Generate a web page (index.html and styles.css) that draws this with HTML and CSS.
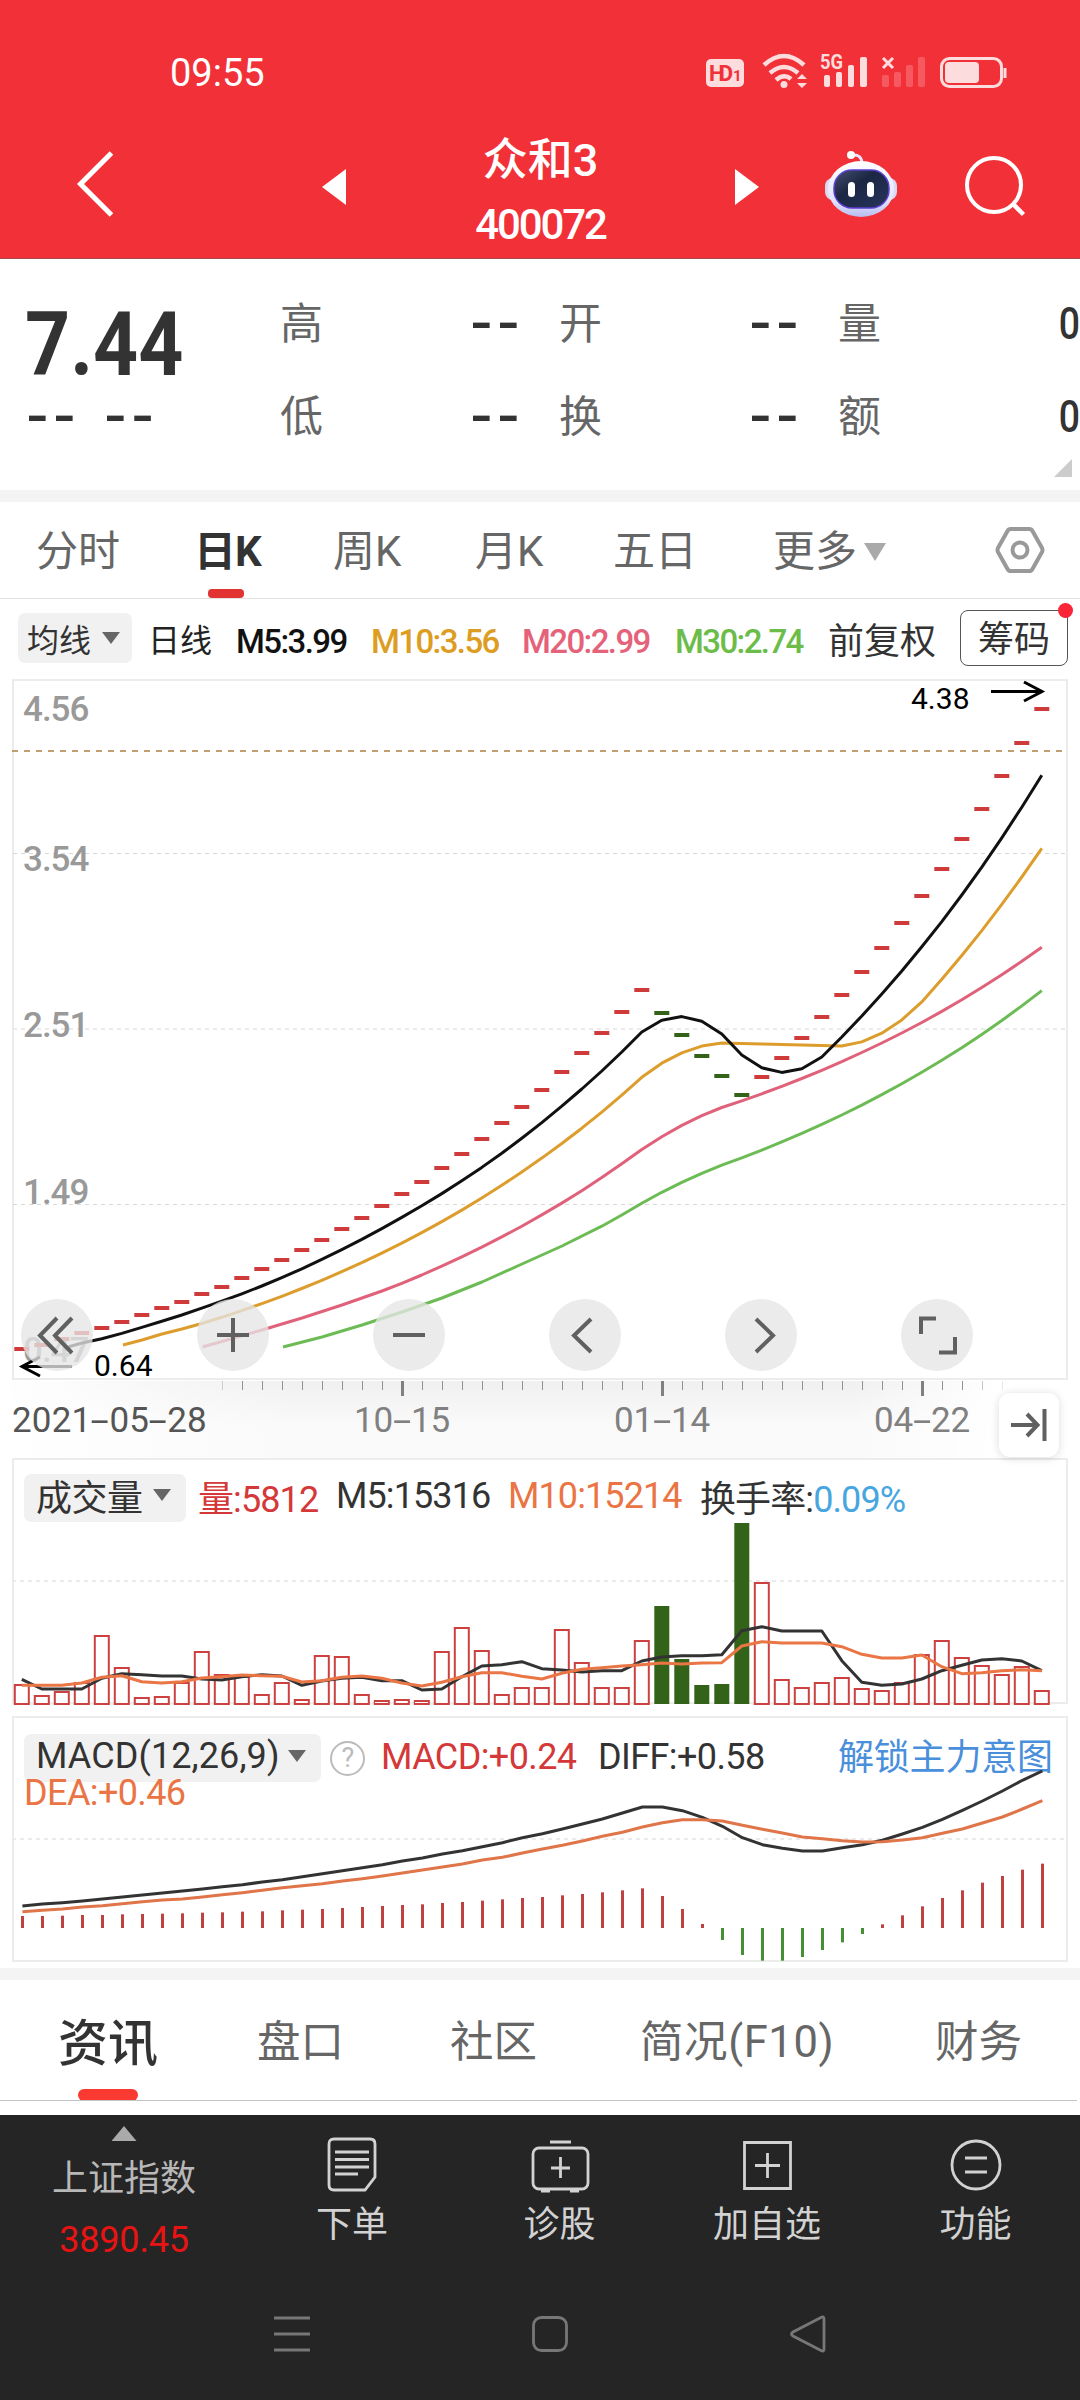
FILE: index.html
```html
<!DOCTYPE html>
<html lang="zh-CN">
<head>
<meta charset="utf-8">
<title>众和3 400072</title>
<link rel="stylesheet" href="styles.css">
</head>
<body>
<header class="top">
  <div class="status">
    <span class="clock">09:55</span>
    <svg class="status-icons" width="304" height="40" viewBox="704 50 304 40">
      <rect x="706" y="59" width="38" height="28" rx="5" fill="#fddcdd"/>
      <text x="709" y="81" class="hd" textLength="24">HD</text><text x="733" y="81" class="hd-sub">1</text>
      <g fill="none" stroke="#fddcdd" stroke-width="4.500">
        <path d="M764 65Q784 47 804 65M770 73Q784 61 798 73M776 80Q784 73 791 79"/>
      </g>
      <circle cx="784" cy="84.500" r="3.500" fill="#fddcdd"/>
      <path d="M797 79l5-5 5 5zM797 83l5 5 5-5z" fill="#fddcdd"/>
      <text x="820" y="69" class="net" textLength="23" lengthAdjust="spacingAndGlyphs">5G</text>
      <g fill="#fddcdd"><rect x="824" y="75" width="6" height="12" rx="2"/><rect x="836" y="72" width="6" height="15" rx="2"/><rect x="848" y="65" width="6" height="22" rx="2"/><rect x="860" y="57" width="7" height="30" rx="2"/></g>
      <path d="M883 58l10 10m0-10l-10 10" stroke="#fddcdd" stroke-width="3"/>
      <g fill="#f65a60"><rect x="882" y="75" width="7" height="12" rx="2"/><rect x="894" y="72" width="7" height="15" rx="2"/><rect x="906" y="65" width="7" height="22" rx="2"/><rect x="918" y="57" width="7" height="30" rx="2"/></g>
      <rect x="941.500" y="58.500" width="60" height="28" rx="8" fill="none" stroke="#fddcdd" stroke-width="3"/>
      <rect x="945" y="62" width="34" height="21" rx="4" fill="#fddcdd"/>
      <path d="M1005 68v10" stroke="#fddcdd" stroke-width="3"/>
    </svg>
  </div>
  <div class="titlebar">
    <svg class="back" width="44" height="70" viewBox="0 0 44 70" fill="none" stroke="#fff" stroke-width="5"><path d="M37.500 4L6.500 35 37.500 66"/></svg>
    <svg class="prev" width="24" height="36" viewBox="0 0 24 36" fill="#fff"><path d="M24 0v36L0 18z"/></svg>
    <div class="name"><h1>众和3</h1><p>400072</p></div>
    <svg class="next" width="24" height="36" viewBox="0 0 24 36" fill="#fff"><path d="M0 0v36l24-18z"/></svg>
    <svg class="robot" width="74" height="70" viewBox="824 149 74 70">
      <defs>
        <linearGradient id="shell" x1="0" y1="0" x2="0" y2="1"><stop offset="0" stop-color="#fff"/><stop offset=".7" stop-color="#e4e4fb"/><stop offset="1" stop-color="#b9bdf0"/></linearGradient>
        <linearGradient id="visor" x1="0" y1="0" x2="1" y2="1"><stop offset="0" stop-color="#45506f"/><stop offset=".4" stop-color="#1c2744"/><stop offset="1" stop-color="#27345c"/></linearGradient>
      </defs>
      <path d="M862 164Q862 154 852 155" fill="none" stroke="#e9e6fb" stroke-width="3"/>
      <circle cx="851" cy="155" r="4" fill="#fff"/>
      <rect x="825" y="178" width="72" height="22" rx="8" fill="#dcd9f7"/>
      <ellipse cx="861" cy="189" rx="33" ry="28" fill="url(#shell)"/>
      <rect x="834" y="170" width="55" height="38" rx="18" fill="url(#visor)" stroke="#5a3fd0" stroke-width="1.500"/>
      <rect x="848" y="182" width="7" height="15" rx="3.500" fill="#fff"/><rect x="867" y="182" width="7" height="15" rx="3.500" fill="#fff"/>
    </svg>
    <svg class="search" width="62" height="62" viewBox="964 155 62 62" fill="none" stroke="#fff" stroke-width="4"><circle cx="994" cy="185" r="27"/><path d="M1013 204l10.500 10.500" stroke-width="4.500"/></svg>
  </div>
</header>

<section class="quote">
  <div class="price"><strong>7.44</strong><p class="dash"><span>--</span><span>--</span></p></div>
  <dl>
    <dt>高</dt><dd class="dash">--</dd><dt>开</dt><dd class="dash">--</dd><dt>量</dt><dd>0</dd>
    <dt>低</dt><dd class="dash">--</dd><dt>换</dt><dd class="dash">--</dd><dt>额</dt><dd>0</dd>
  </dl>
  <i class="corner"></i>
</section>

<nav class="periods">
  <span>分时</span><span class="on">日K</span><span>周K</span><span>月K</span><span>五日</span><span>更多<i class="caret"></i></span>
  <svg width="50" height="48" viewBox="0 0 50 48" fill="none" stroke="#999" stroke-width="4"><path d="M15.500 3h19q2 0 3 2L47 22q1 2 0 4L37.500 43q-1 2-3 2h-19q-2 0-3-2L3 26q-1-2 0-4L12.500 5q1-2 3-2z"/><circle cx="25" cy="24" r="7.500"/></svg>
</nav>

<section class="averages">
  <span class="pick">均线<i class="caret"></i></span>
  <span class="day">日线</span>
  <span class="num black">M5:3.99</span><span class="num gold">M10:3.56</span><span class="num pink">M20:2.99</span><span class="num green">M30:2.74</span>
  <span class="adj">前复权</span>
  <span class="chips">筹码<i></i></span>
</section>

<section class="kline">
  <svg id="kline" width="1080" height="702" viewBox="0 679 1080 702">
    <rect x="13" y="680" width="1054" height="699" class="frame"/>
    <path d="M13 853.500H1066M13 1204.500H1066" class="grid"/><path d="M13 1029H1066" class="grid soft"/>
    <path d="M12 751H1063" class="limit"/>
    <g class="scale"><text x="23" y="721">4.56</text><text x="23" y="871">3.54</text><text x="23" y="1037">2.51</text><text x="23" y="1204">1.49</text><text x="23" y="1362">0.47</text></g>
    <g class="plot"></g>
    <g class="peak"><text x="911" y="709">4.38</text><text x="94" y="1376">0.64</text><path d="M991 691.500h50M1024 682l18 9.500-18 9.500M72 1366.500H22M40 1357l-18 9.500 18 9.500"/></g>
  </svg>
  <div class="tools">
    <b><svg viewBox="0 0 72 72"><path d="M36 19L19 36.500 36 54M51 19L34 36.500 51 54"/></svg></b>
    <b><svg viewBox="0 0 72 72"><path d="M20 36h32M36 19v34"/></svg></b>
    <b><svg viewBox="0 0 72 72"><path d="M20 36h32"/></svg></b>
    <b><svg viewBox="0 0 72 72"><path d="M42 20L25 36.500 42 53"/></svg></b>
    <b><svg viewBox="0 0 72 72"><path d="M31 20l17 16.500L31 53"/></svg></b>
    <b><svg viewBox="0 0 72 72"><path d="M35 19.500H20V35M54 38v15.500H38"/></svg></b>
  </div>
</section>

<section class="axis">
  <svg id="ticks" width="1080" height="16" viewBox="0 1380 1080 16"></svg>
  <div class="dates"><time class="from">2021<i>-</i>05<i>-</i>28</time><time>10<i>-</i>15</time><time>01<i>-</i>14</time><time>04<i>-</i>22</time></div>
  <b class="latest"><svg width="60" height="64" viewBox="0 0 60 64" fill="none" stroke="#606060" stroke-width="4"><path d="M12 32h25M28 21l10.500 11L28 43M45.500 16v32"/></svg></b>
</section>

<section class="panel volume">
  <div class="legend">
    <span class="pick">成交量<i class="caret"></i></span>
    <span class="red">量:5812</span><span>M5:15316</span><span class="orange">M10:15214</span><span class="turnover">换手率:<em>0.09%</em></span>
  </div>
  <svg id="volume" width="1080" height="187" viewBox="0 1519 1080 187"><path d="M12 1581H1066" class="grid soft"/><g class="plot"></g></svg>
</section>

<section class="panel macd">
  <div class="legend">
    <span class="pick">MACD(12,26,9)<i class="caret"></i></span>
    <span class="help">?</span>
    <span class="red">MACD:+0.24</span><span>DIFF:+0.58</span><a>解锁主力意图</a>
  </div>
  <p class="orange">DEA:+0.46</p>
  <svg id="macd" width="1080" height="192" viewBox="0 1770 1080 192"><path d="M12 1839H1066" class="grid soft"/><g class="plot"></g></svg>
</section>

<nav class="sections"><span class="on">资讯</span><span>盘口</span><span>社区</span><span class="brief">简况(F10)</span><span>财务</span></nav>

<footer>
  <div class="actions">
    <div class="index"><i></i><span>上证指数</span><strong>3890.45</strong></div>
    <div><svg viewBox="0 0 60 56"><path d="M12 2h36q5 0 5 5v33L43 53H12q-5 0-5-5V7q0-5 5-5z"/><path d="M13 15h34M13 22.500h34M13 30h34M13 37h23"/></svg><span>下单</span></div>
    <div><svg viewBox="0 0 60 56"><rect x="3" y="11" width="55" height="41" rx="6"/><path d="M20 5h21M30.500 20v21M21 31h19M11 54h9M40 54h9"/></svg><span>诊股</span></div>
    <div><svg viewBox="0 0 60 56"><path d="M7.500 5.500h46v46h-46zM30.500 16v25M18 28.500h25"/></svg><span>加自选</span></div>
    <div><svg viewBox="0 0 60 56"><circle cx="30" cy="28" r="24"/><path d="M19 21h22M19 35h22"/></svg><span>功能</span></div>
  </div>
  <div class="system">
    <svg viewBox="0 0 40 40"><path d="M2 4h36M2 20h36M2 36h36"/></svg>
    <svg viewBox="0 0 40 40"><rect x="3.500" y="3.500" width="33" height="33" rx="8"/></svg>
    <svg viewBox="0 0 40 40"><path d="M36 5v30q0 3-3 1.500L5 22q-3-2 0-4L33 3.500q3-1.500 3 1.500z"/></svg>
  </div>
</footer>
<script src="charts.js"></script>
</body>
</html>
```
FILE: styles.css
```css
* { box-sizing: border-box; margin: 0; padding: 0; }
body { width: 1080px; background: #fff; color: #333; font-family: Roboto, "Noto Sans CJK SC", sans-serif; font-size: 42px; overflow-x: hidden; }
svg { display: block; flex: none; }
i, em { font-style: normal; }

.top { height: 259px; background: #f23037; border-bottom: 1px solid #a8484c; color: #fff; }
.status { height: 130px; display: flex; justify-content: space-between; align-items: flex-start; padding: 50px 72px 0 170px; }
.clock { font-size: 38px; line-height: 47px; }
.hd { font: 700 22px Roboto, sans-serif; fill: #f23037; }
.hd-sub { font: 700 15px Roboto, sans-serif; fill: #f23037; }
.net { font: 700 20px Roboto, sans-serif; fill: #fddcdd; }
.titlebar { height: 128px; display: grid; grid-template-columns: 74px 44px 204px 24px 389px 24px 65px 74px 66px 62px; align-items: center; }
.back { grid-column: 2; margin-top: -20px; }
.prev { grid-column: 4; margin-top: -15px; }
.name { grid-column: 5; text-align: center; }
.next { grid-column: 6; margin-top: -15px; }
.robot { grid-column: 8; margin-top: -20px; }
.search { grid-column: 10; margin-top: -16px; }
.name h1 { font-size: 45px; line-height: 56px; margin-bottom: 5px; font-weight: 500; }
.name p { font-size: 42px; line-height: 62px; font-weight: 500; letter-spacing: -2.100px; }

.quote { height: 243px; border-bottom: 12px solid #f4f4f4; display: grid; grid-template-columns: 279px 801px; position: relative; }
.price { padding: 48px 0 0 25px; }
.price strong { display: block; font-size: 89px; line-height: 76px; transform: scaleX(.885); transform-origin: 0 50%; white-space: nowrap; }
.price .dash { display: flex; gap: 24px; line-height: 60px; height: 60px; padding-left: 1px; }
.dash { font-family: "Liberation Sans", sans-serif; font-size: 68px; letter-spacing: 4.400px; font-weight: 400; }
dl { display: grid; grid-template-columns: 60px 219px 60px 219px 60px 183px; grid-template-rows: 93px 93px; align-items: center; padding-top: 18px; }
dt { font-size: 43px; color: #666; line-height: 60px; white-space: nowrap; padding-left: 1px; }
dd { font-size: 44px; font-weight: 500; line-height: 60px; text-align: right; }
dd:nth-of-type(3n) { transform: scaleX(.85); transform-origin: 100% 50%; }
dd.dash { font-size: 68px; font-weight: 400; padding: 0 34px 8px 0; }
.corner { position: absolute; right: 8px; top: 200px; width: 18px; height: 18px; background: #ccc; clip-path: polygon(100% 0, 100% 100%, 0 100%); }

.periods { height: 97px; border-bottom: 1px solid #e3e3e3; display: grid; grid-template-columns: 158px 139px 142px 138px 160px 222px 50px; padding-left: 36px; align-items: center; color: #666; font-size: 42px; }
.periods span { position: relative; line-height: 99px; height: 96px; white-space: nowrap; }
.periods .on { color: #333; font-weight: 700; letter-spacing: -1px; }
.periods .on::after { content: ""; position: absolute; left: 14px; bottom: 0; width: 36px; height: 9px; border-radius: 4px; background: #e23333; }
.caret { display: inline-block; width: 18px; height: 12px; background: #666; clip-path: polygon(0 0, 100% 0, 50% 100%); }
.periods .caret { width: 22px; height: 18px; background: #aaa; margin-left: 7px; vertical-align: 5px; }

.averages { height: 80px; display: grid; grid-template-columns: 130px 88px 135px 151px 153px 153px 132px 108px; padding: 0 0 2px 18px; align-items: center; }
.pick { background: #f1f1f1; border-radius: 7px; white-space: nowrap; display: flex; align-items: center; justify-content: space-between; }
.averages .pick { width: 114px; height: 50px; font-size: 32px; padding: 0 12px 0 9px; }
.day { font-size: 32px; color: #222; }
.num { font-size: 33px; font-weight: 500; letter-spacing: -1.600px; padding-top: 6px; }
.black { color: #111; } .gold { color: #dc9d22; } .pink { color: #e4627a; } .green { color: #6cbc49; }
.adj { font-size: 36px; white-space: nowrap; }
.chips { position: relative; height: 56px; border: 1.500px solid #555; border-radius: 8px; font-size: 36px; line-height: 59px; text-align: center; }
.chips i { position: absolute; right: -6px; top: -8px; width: 15px; height: 15px; border-radius: 50%; background: #fb2538; }

.kline { height: 702px; position: relative; }
.frame { fill: none; stroke: #ececec; stroke-width: 2; }
.grid { stroke: #d8d8d8; stroke-width: 1; stroke-dasharray: 4 4; }
.grid.soft { stroke: #ebebeb; stroke-width: 2; }
.limit { stroke: #c0a070; stroke-width: 2; stroke-dasharray: 6 6; }
.scale { font: 500 35px Roboto, sans-serif; fill: #999; letter-spacing: -1px; }
.peak text { font: 400 30px Roboto, sans-serif; fill: #000; }
.peak path { fill: none; stroke: #000; stroke-width: 3; }
.line { fill: none; stroke-width: 3; stroke-linejoin: round; }
.tools { position: absolute; left: 21px; top: 620px; display: flex; gap: 104px; }
.tools b { width: 72px; height: 72px; border-radius: 50%; background: rgba(230, 230, 230, .78); }
.tools svg { width: 72px; height: 72px; fill: none; stroke: #606060; stroke-width: 4; }

.axis { height: 77px; position: relative; background: linear-gradient(90deg, #fff 0, rgba(255,255,255,0) 300px, rgba(255,255,255,0) 850px, #fff 1000px), linear-gradient(#f0f0f0, #fafafa 60%); }
.dates { display: grid; grid-template-columns: 342px 260px 260px 120px; padding-left: 12px; color: #808080; font-size: 35px; line-height: 42px; margin-top: 3px; }
.dates time { white-space: nowrap; letter-spacing: -.200px; }
.dates .from { color: #555; letter-spacing: .200px; }
.dates i { display: inline-block; width: 18px; text-align: center; transform: scaleX(1.9); }
.latest { position: absolute; z-index: 1; left: 999px; top: 12px; width: 60px; height: 64px; border-radius: 11px; background: #fff; box-shadow: 0 1px 10px rgba(0,0,0,.14); }

.panel { position: relative; width: 1080px; }
.panel::before { content: ""; position: absolute; left: 12px; right: 12px; top: 0; bottom: 0; border: 2px solid #ececec; }
.panel > * { position: relative; }
.volume { height: 247px; padding-top: 12px; }
.volume::before { bottom: 1px; }
.volume > svg { margin-top: 1px; }
.macd { height: 246px; margin-top: 11px; padding-top: 12px; }
.legend { display: grid; align-items: center; height: 48px; padding-left: 24px; font-size: 36px; letter-spacing: -.900px; white-space: nowrap; }
.legend > span:not(.pick):not(.help) { padding-bottom: 3px; }
.legend > span.turnover { padding-bottom: 5px; }
.volume .legend { grid-template-columns: 174px 138px 172px 192px 260px; }
.macd .legend { grid-template-columns: 306px 51px 217px 240px 230px; }
.legend .pick { height: 48px; padding: 0 15px 4px 12px; }
.volume .pick { width: 162px; } .macd .pick { width: 297px; letter-spacing: .100px; }
.volume .pick { letter-spacing: -.500px; padding-bottom: 5px; }
.red { color: #d43838; } .orange { color: #ea7444; } .legend em { color: #47a6df; }
.legend a { color: #4a8fdc; letter-spacing: -.200px; padding-bottom: 8px; }
.help { width: 35px; height: 35px; border: 2.500px solid #bbb; border-radius: 50%; font-size: 27px; line-height: 30px; text-align: center; color: #bbb; }
.macd .red, .macd .red + span { letter-spacing: -.600px; }
.macd p { height: 0; padding-left: 24px; font-size: 36px; line-height: 34px; letter-spacing: -.600px; }
.macd > svg { margin-top: -6px; }

.sections { margin-top: 6px; border-top: 12px solid #f4f4f4; height: 147px; display: grid; grid-template-columns: 199px 193px 190px 295px 140px; padding-left: 58px; color: #666; font-size: 43.500px; position: relative; }
.sections span { line-height: 126px; height: 121px; white-space: nowrap; position: relative; }
.sections .brief { letter-spacing: .600px; }
.sections .on { color: #333; font-size: 50px; line-height: 129px; font-weight: 500; }
.sections .on::after { content: ""; position: absolute; left: 20px; bottom: 0; width: 60px; height: 12px; border-radius: 6px; background: #fa3a30; }
.sections::after { content: ""; position: absolute; left: 0; right: 3px; top: 120px; border-top: 1px solid #c4c4c4; }

footer { height: 285px; background: #252525; }
.actions { display: grid; grid-template-columns: 248px 208px 207px 208px 209px; height: 160px; color: #d2d2d2; font-size: 36px; }
.actions div { display: flex; flex-direction: column; align-items: center; padding-top: 22px; }
.actions svg { width: 60px; height: 56px; fill: none; stroke: #d2d2d2; stroke-width: 2.800; }
.actions span { line-height: 48px; margin-top: 8px; }
.actions .index { padding-top: 11px; color: #b8b8b8; }
.index i { width: 25px; height: 15px; background: #aaa; clip-path: polygon(50% 0, 100% 100%, 0 100%); }
.actions .index span { margin-top: 14px; }
.index strong { font-weight: 400; color: #e81414; font-size: 36px; line-height: 44px; margin-top: 15px; letter-spacing: -.200px; }
.system { display: flex; padding: 39px 0 0 272px; gap: 218px; }
.system svg { width: 40px; height: 40px; fill: none; stroke: #777; stroke-width: 2.800; }
```
FILE: charts.js
```js
// Plot coordinates: one trading day every 20px, 52 days.
const X = i => 21.8 + 20 * i;
const closes = [1349,1345,1339,1333,1328,1322,1315,1308,1302,1294,1287,1278,1269,1260,1250,1240,1229,1218,1206,1194,1182,1168,1154,1139,1123,1107,1090,1072,1053,1033,1012,990,1013,1035,1056,1076,1095,1077,1058,1038,1017,995,972,948,923,896,869,839,809,776,743,709];
const isDown = i => i >= 32 && i <= 36;

function add(parent, tag, attrs) {
  const el = document.createElementNS('http://www.w3.org/2000/svg', tag);
  for (const k in attrs) el.setAttribute(k, attrs[k]);
  parent.appendChild(el);
}
function line(parent, points, color) {
  add(parent, 'polyline', { points: points.map(p => p[0].toFixed(1) + ',' + p[1].toFixed(1)).join(' '), stroke: color, class: 'line' });
}
function average(n, lead) {
  const pts = lead.slice();
  for (let i = n - 1; i < closes.length; i++) {
    let sum = 0;
    for (let j = 0; j < n; j++) sum += closes[i - j];
    pts.push([X(i), sum / n]);
  }
  return pts;
}

const k = document.querySelector('#kline .plot');
closes.forEach((y, i) => add(k, 'rect', { x: X(i) - 7.5, y: y - 2, width: 15, height: 4, fill: isDown(i) ? '#336318' : '#cf3b3b' }));
line(k, average(30, [[283,1347],[322,1337],[362,1325],[402,1312],[442,1298],[482,1282],[522,1264],[562,1246]]), '#6cbb54');
line(k, average(20, [[202.5,1347],[262,1330],[302,1318],[342,1305],[382,1291]]), '#e0627a');
line(k, average(10, [[123,1345],[142,1340],[162,1334],[182,1329]]), '#dc9d2c');
line(k, average(5, [[68,1347],[82,1343]]), '#111');

const ticks = document.querySelector('#ticks');
for (let i = 10; i <= 49; i++) {
  const major = i === 19 || i === 32 || i === 45;
  const fade = i === 10 ? .4 : i === 49 ? .2 : i === 48 ? .5 : 1;
  add(ticks, 'rect', { x: X(i) + (major ? -.8 : .2), y: 1380, width: major ? 3 : 1, height: major ? 15 : 9, fill: major ? '#808080' : '#909090', opacity: fade });
}

const tops = [1684,1695,1691,1682,1635,1667,1697,1696,1682,1651,1674,1676,1694,1682,1699,1655,1656,1694,1700,1699,1700,1651,1627,1650,1694,1687,1687,1629,1662,1687,1687,1640,1606,1659,1685,1684,1523,1582,1679,1687,1682,1677,1688,1690,1682,1654,1640,1657,1665,1674,1666,1690];
const v = document.querySelector('#volume .plot');
tops.forEach((y, i) => {
  if (isDown(i)) add(v, 'rect', { x: X(i) - 7.5, y, width: 15, height: 1704 - y, fill: '#336318' });
  else add(v, 'rect', { x: X(i) - 7, y: y + 1, width: 14, height: 1703 - y, fill: '#fff', stroke: '#cc4040', 'stroke-width': 2 });
});
const vol5 = [688,717,717,717,685,671,674,678,678,687,690,680,674,678,706,693,685,682,692,692,720,717,680,648,644,635,656,660,666,662,662,633,621,617,617,614,542,530,543,543,543,632,697,706,702,687,662,646,630,626,633,662];
const vol10 = [706,706,706,699,682,677,695,699,695,684,680,675,677,679,696,692,682,678,685,699,708,697,680,668,668,679,687,670,658,653,648,644,639,642,639,638,588,575,579,579,579,590,613,624,624,615,650,671,668,662,659,662];
line(v, vol5.map((y, i) => [X(i), 1450 + y / 3]), '#333');
line(v, vol10.map((y, i) => [X(i), 1450 + y / 3]), '#ea7545');

const bars = [618,618,617,615,615,613,612,611,610,608,607,605,604,601,599,597,594,591,588,585,583,579,576,572,568,564,561,556,552,547,541,535,558,597,642,690,735,752,752,741,720,697,672,643,616,589,564,541,518,498,479,461];
const diff = [588,582,578,573,567,561,555,549,543,537,530,524,516,509,500,491,482,473,464,453,444,432,422,410,398,383,371,357,342,327,309,291,291,302,322,349,383,404,415,423,423,413,404,391,372,352,328,301,273,243,211,183];
const dea = [605,601,597,591,587,581,575,570,567,561,554,548,541,533,527,521,513,506,498,489,480,471,462,450,442,429,417,406,393,379,367,351,338,329,329,333,346,358,369,381,386,392,396,395,390,383,370,357,339,321,297,272];
const m = document.querySelector('#macd .plot');
bars.forEach((b, i) => {
  const y = 1710 + b / 3, zero = 1928;
  add(m, 'rect', { x: X(i) - .8, y: Math.min(y, zero), width: 3, height: Math.abs(y - zero), fill: y < zero ? '#bf4242' : '#458f35' });
});
line(m, diff.map((y, i) => [X(i) + .6, 1710 + y / 3]), '#333');
line(m, dea.map((y, i) => [X(i) + .6, 1710 + y / 3]), '#df7548');
```
